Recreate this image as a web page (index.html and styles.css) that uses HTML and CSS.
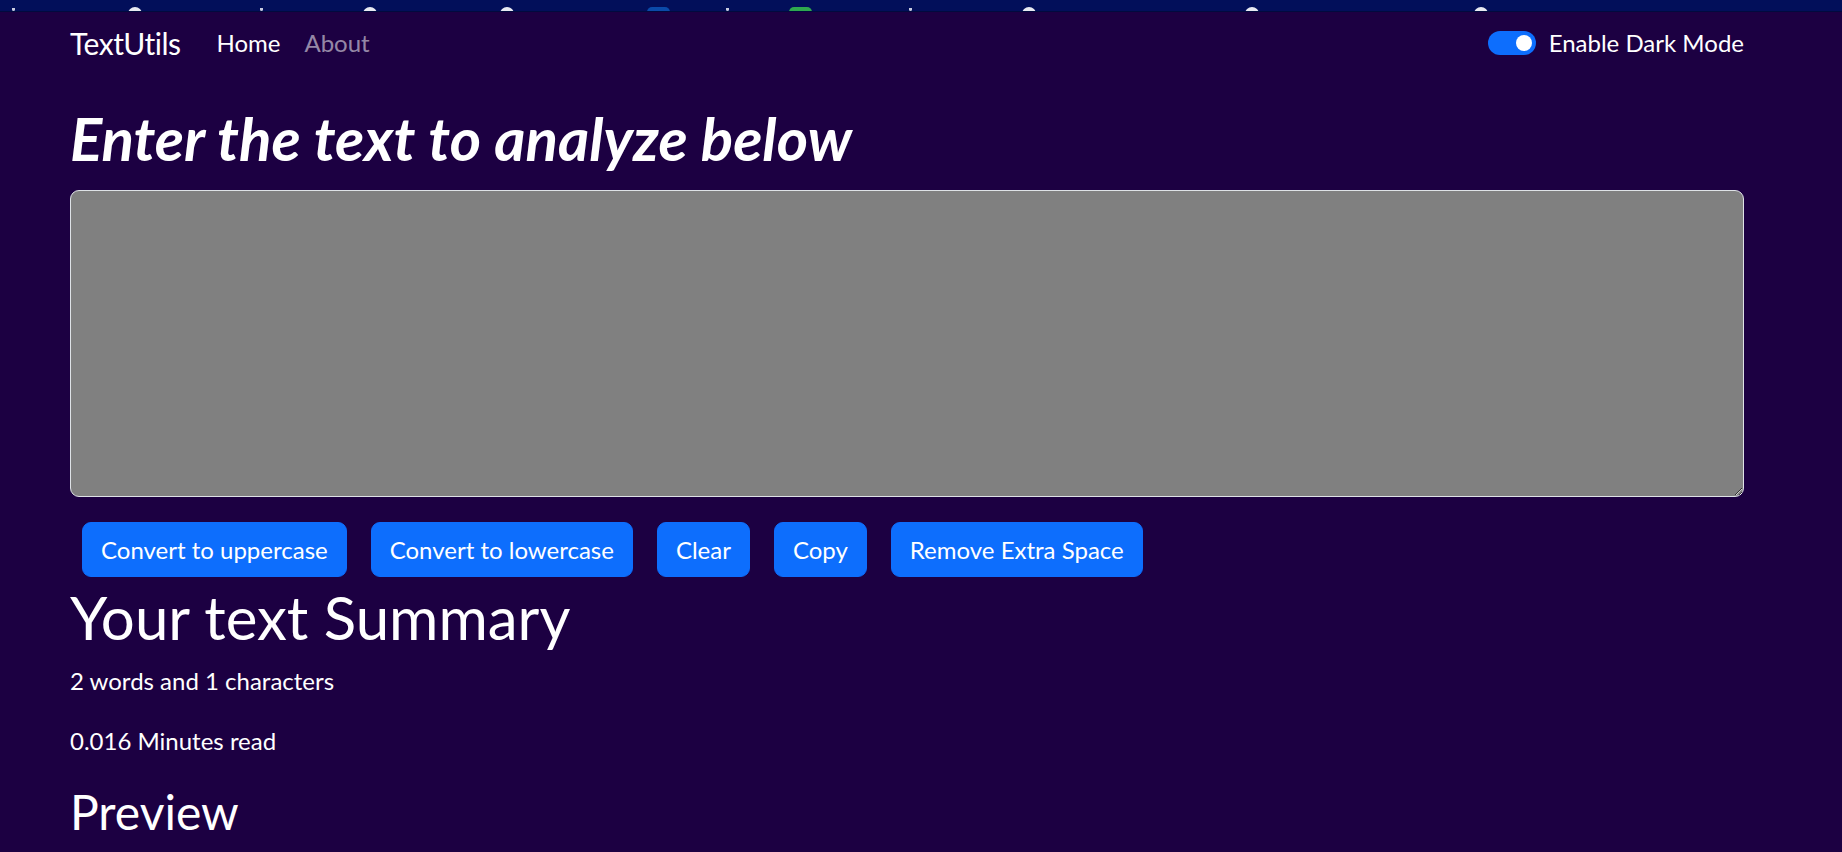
FILE: index.html
```html
<!DOCTYPE html>
<html lang="en">
<head>
<meta charset="utf-8">
<title>TextUtils</title>
<link rel="stylesheet" href="styles.css">
</head>
<body>
<div class="bookmarks">
  <span class="bm bm-t1"></span>
  <span class="bm fav fav1"></span>
  <span class="bm bm-t2"></span>
  <span class="bm fav fav2"></span>
  <span class="bm fav fav3"></span>
  <span class="bm sq sq-blue"></span>
  <span class="bm bm-t3"></span>
  <span class="bm sq sq-green"></span>
  <span class="bm bm-t4"></span>
  <span class="bm fav fav4"></span>
  <span class="bm fav fav5"></span>
  <span class="bm fav fav6"></span>
</div>
<nav class="navbar">
  <div class="container nav-inner">
    <a class="brand" href="#">TextUtils</a>
    <ul class="nav">
      <li><a class="nav-link active" href="#">Home</a></li>
      <li><a class="nav-link" href="#">About</a></li>
    </ul>
    <div class="switch">
      <span class="switch-track"></span>
      <label class="switch-label">Enable Dark Mode</label>
    </div>
  </div>
</nav>
<main class="container">
  <h1 class="title">Enter the text to analyze below</h1>
  <textarea class="textbox" rows="8"></textarea>
  <div class="actions">
    <button class="btn">Convert to uppercase</button>
    <button class="btn">Convert to lowercase</button>
    <button class="btn">Clear</button>
    <button class="btn">Copy</button>
    <button class="btn">Remove Extra Space</button>
  </div>
  <h1 class="summary-title">Your text Summary</h1>
  <p class="stat">2 words and 1 characters</p>
  <p class="stat">0.016 Minutes read</p>
  <h2 class="preview-title">Preview</h2>
</main>
</body>
</html>
```
FILE: styles.css
```css
html {
  overflow: hidden;
}
body {
  margin: 0;
  background: #1c0042;
  color: #ffffff;
  font-family: Lato, "Noto Sans", sans-serif;
  font-size: 24px;
  line-height: 1.5;
}
.bookmarks {
  height: 11px;
  background: #020f5a;
  border-bottom: 1px solid #010a3e;
  display: flex;
  align-items: flex-end;
  overflow: hidden;
}
.bm {
  flex: none;
  display: block;
}
.fav {
  width: 14px;
  height: 14px;
  border-radius: 50%;
  background: #e8eaf2;
  margin-bottom: -10px;
}
.sq {
  width: 23px;
  height: 16px;
  border-radius: 5px;
  margin-bottom: -12px;
}
.sq-blue { background: #0b4aa8; }
.sq-green { background: #2fa84f; }
.bm-t1, .bm-t2, .bm-t3, .bm-t4 {
  width: 3px;
  height: 3px;
  background: #c9cce0;
  border-radius: 0 0 2px 2px;
}
.bm-t1 { margin-left: 12px; }
.fav1 { margin-left: 113px; }
.bm-t2 { margin-left: 118px; }
.fav2 { margin-left: 100px; }
.fav3 { margin-left: 123px; }
.sq-blue { margin-left: 133px; }
.bm-t3 { margin-left: 56px; }
.sq-green { margin-left: 60px; }
.bm-t4 { margin-left: 97px; }
.fav4 { margin-left: 110px; }
.fav5 { margin-left: 209px; }
.fav6 { margin-left: 215px; }

.container {
  width: 1674px;
  margin-left: 70px;
}
.navbar {
  height: 62px;
}
.nav-inner {
  height: 100%;
  display: flex;
  align-items: center;
}
.brand {
  color: #ffffff;
  text-decoration: none;
  font-size: 30px;
  line-height: 45px;
  letter-spacing: -0.5px;
  margin-right: 24px;
}
.nav {
  display: flex;
  list-style: none;
  margin: 0;
  padding: 0;
  flex: 1;
}
.nav-link {
  display: block;
  padding: 0 12px;
  color: rgba(255, 255, 255, 0.55);
  text-decoration: none;
  line-height: 36px;
}
.nav-link.active {
  color: #ffffff;
}
.switch {
  display: flex;
  align-items: center;
  gap: 13px;
}
.switch-track {
  position: relative;
  display: block;
  width: 48px;
  height: 24px;
  border-radius: 12px;
  background: #0d6efd;
}
.switch-track::after {
  content: "";
  position: absolute;
  right: 4px;
  top: 4px;
  width: 16px;
  height: 16px;
  border-radius: 50%;
  background: #ffffff;
}
.switch-label {
  line-height: 36px;
}

.title {
  margin: 28px 0 16px;
  font-size: 60px;
  line-height: 72px;
  font-weight: 700;
  font-style: italic;
}
.textbox {
  display: block;
  box-sizing: border-box;
  width: 1674px;
  height: 307px;
  margin: 0;
  padding: 9px 18px;
  background: #808080;
  color: #ffffff;
  border: 1.5px solid #dee2e6;
  border-radius: 9px;
  font: inherit;
  resize: vertical;
}
.actions {
  display: flex;
  gap: 24px;
  padding: 0 12px;
  margin-top: 25px;
}
.btn {
  height: 55px;
  padding: 0 18px;
  border: 1px solid #0d6efd;
  border-radius: 9px;
  background: #0d6efd;
  color: #ffffff;
  font: inherit;
  line-height: 36px;
}
.summary-title {
  margin: 4px 0 10px;
  font-size: 60px;
  line-height: 72px;
  font-weight: 400;
}
.stat {
  margin: 0 0 24px;
}
.preview-title {
  margin: 2px 0 0;
  font-size: 48px;
  line-height: 57.6px;
  font-weight: 400;
}
```
